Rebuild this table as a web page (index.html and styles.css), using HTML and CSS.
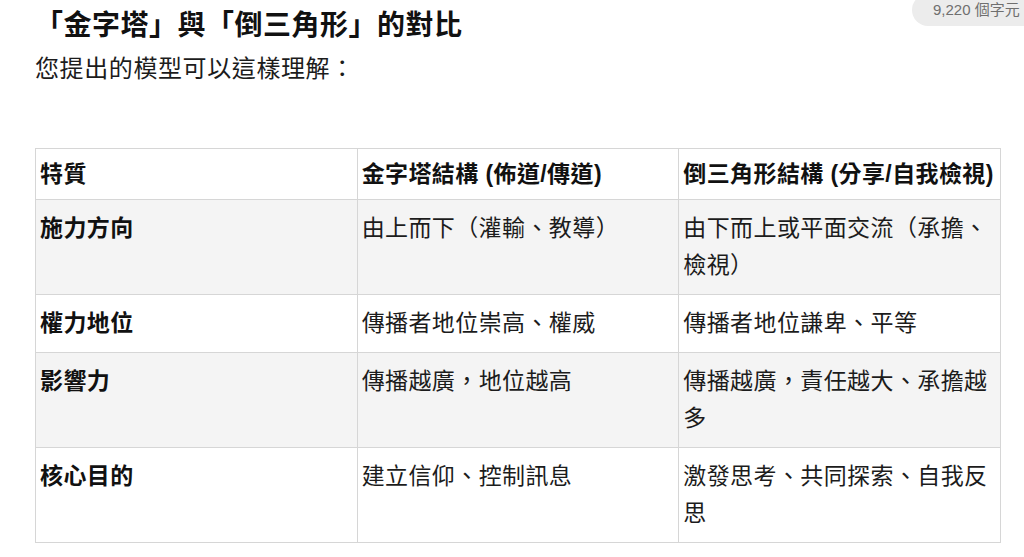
FILE: index.html
```html
<!DOCTYPE html>
<html lang="zh-Hant">
<head>
<meta charset="utf-8">
<title>金字塔與倒三角形的對比</title>
<link rel="stylesheet" href="styles.css">
</head>
<body>
<div class="page">
  <div class="count-pill">9,220 個字元</div>
  <h1 class="title">「金字塔」與「倒三角形」的對比</h1>
  <p class="lead">您提出的模型可以這樣理解：</p>
  <table class="compare">
    <thead>
      <tr>
        <th>特質</th>
        <th>金字塔結構 (佈道/傳道)</th>
        <th>倒三角形結構 (分享/自我檢視)</th>
      </tr>
    </thead>
    <tbody>
      <tr class="alt">
        <td class="key">施力方向</td>
        <td>由上而下（灌輸、教導）</td>
        <td>由下而上或平面交流（承擔、檢視）</td>
      </tr>
      <tr>
        <td class="key">權力地位</td>
        <td>傳播者地位崇高、權威</td>
        <td>傳播者地位謙卑、平等</td>
      </tr>
      <tr class="alt">
        <td class="key">影響力</td>
        <td>傳播越廣，地位越高</td>
        <td>傳播越廣，責任越大、承擔越多</td>
      </tr>
      <tr>
        <td class="key">核心目的</td>
        <td>建立信仰、控制訊息</td>
        <td>激發思考、共同探索、自我反思</td>
      </tr>
    </tbody>
  </table>
</div>
</body>
</html>
```

FILE: styles.css
```css
html, body {
  margin: 0;
  padding: 0;
  background: #ffffff;
  overflow: hidden;
}

body {
  font-family: "Liberation Sans", "Noto Sans CJK TC", sans-serif;
  color: #1c1c1c;
}

.page {
  position: relative;
  width: 965px;
  padding: 6px 0 0 35px;
}

.count-pill {
  position: absolute;
  top: -6px;
  left: 912px;
  height: 32px;
  line-height: 32px;
  padding: 0 22px 0 21px;
  border-radius: 16px;
  background: #ececec;
  color: #6f6f6f;
  font-size: 15px;
  white-space: nowrap;
}

.title {
  margin: 0;
  font-size: 28px;
  line-height: 40px;
  font-weight: 700;
  letter-spacing: 0.5px;
  color: #111;
}

.lead {
  margin: 5px 0 0 0;
  font-size: 24px;
  line-height: 36px;
  letter-spacing: 0.6px;
  color: #1c1c1c;
}

.compare {
  margin-top: 61px;
  width: 966px;
  border-collapse: collapse;
  table-layout: fixed;
  font-size: 23px;
  letter-spacing: 0.4px;
}

.compare th,
.compare td {
  border: 1px solid #d6d6d6;
  text-align: left;
  vertical-align: top;
  padding: 10px 4px;
  line-height: 37px;
}

.compare th {
  font-weight: 700;
  line-height: 30px;
  background: #ffffff;
  color: #111;
}

.compare td.key {
  font-weight: 700;
  color: #111;
}

.compare tr.alt td {
  background: #f4f4f4;
}
```
